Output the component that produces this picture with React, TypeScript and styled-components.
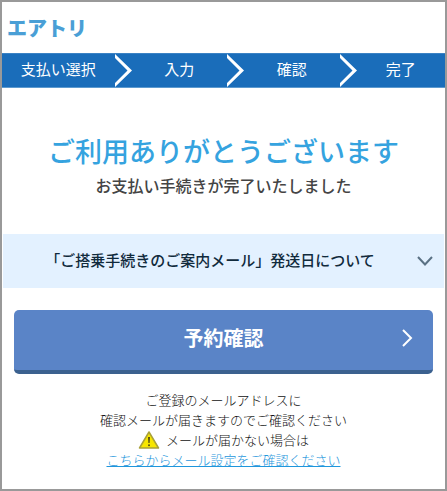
import React from "react";
import styled, { createGlobalStyle } from "styled-components";

const GlobalStyle = createGlobalStyle`
  *, *::before, *::after { box-sizing: border-box; }
  body {
    margin: 0;
    background: #fff;
    color: #333;
    font-family: "Noto Sans CJK JP", sans-serif;
  }
`;

const Page = styled.div`
  display: flex;
  flex-direction: column;
  min-height: 100vh;
  border: 2px solid #999;
  background: #fff;
`;

const Header = styled.header`
  display: flex;
  align-items: center;
  height: 51px;
  padding: 0 5px;
`;

const Logo = styled.a`
  color: #4a9fd6;
  font-size: 20px;
  font-weight: 900;
  line-height: 20px;
  text-decoration: none;
`;

const Steps = styled.ol`
  display: grid;
  grid-template-columns: 16fr 16fr 16fr 15fr;
  height: 35px;
  margin: 0;
  padding: 0;
  list-style: none;
  background: #1a6dba;
  border-top: 1px solid #3b82c4;
  border-bottom: 1px solid #5d9acf;
  color: #fff;
  font-size: 15px;
  line-height: 30px;
`;

const Step = styled.li`
  display: flex;
`;

const StepLabel = styled.span`
  flex: 1;
  text-align: center;
`;

const StepArrow = styled.svg`
  flex: none;
  width: 17px;
  height: 33px;
`;

const Thanks = styled.section`
  padding: 44px 0 36px;
  text-align: center;
`;

const Title = styled.h1`
  margin: 0;
  color: #35a3df;
  font-size: 27px;
  font-weight: 500;
  line-height: 38px;
`;

const Subtitle = styled.p`
  margin: 2px 0 0;
  color: #444;
  font-size: 16px;
  font-weight: 500;
  line-height: 26px;
`;

const Notice = styled.button`
  display: flex;
  align-items: center;
  height: 54px;
  margin: 0 1px;
  padding: 0 11px 0 0;
  border: 0;
  background: #e3f1ff;
  color: #102a3c;
  font: 500 15px/24px "Noto Sans CJK JP", sans-serif;
  cursor: pointer;
`;

const NoticeLabel = styled.span`
  flex: 1;
  padding-bottom: 2px;
  white-space: nowrap;
  text-align: center;
`;

const Confirm = styled.button`
  display: flex;
  align-items: center;
  height: 64px;
  margin: 22px 12px 0;
  padding: 0 20px 4px 32px;
  border: 0;
  border-bottom: 4px solid #3b618f;
  border-radius: 5px;
  background: #5a84c7;
  color: #fff;
  font: 700 20px/28px "Noto Sans CJK JP", sans-serif;
  cursor: pointer;
`;

const ConfirmLabel = styled.span`
  flex: 1;
  text-align: center;
`;

const Help = styled.section`
  padding-top: 16px;
  color: #111;
  font-size: 13px;
  font-weight: 300;
  line-height: 20px;
  text-align: center;
`;

const HelpLine = styled.p`
  display: flex;
  justify-content: center;
  align-items: center;
  gap: 6px;
  margin: 0;
`;

const HelpLink = styled.a`
  color: #1e96dc;
  text-decoration: underline;
`;

const Chevron = styled.svg`
  flex: none;
  fill: none;
  stroke: currentColor;
`;

const NoticeChevron = styled(Chevron)`
  color: #5a7184;
`;

const steps = ["支払い選択", "入力", "確認", "完了"];

export default function App() {
  return (
    <>
      <GlobalStyle />
      <Page>
        <Header>
          <Logo href="#">エアトリ</Logo>
        </Header>
        <Steps>
          {steps.map((step, index) => (
            <Step key={step}>
              {index > 0 && (
                <StepArrow viewBox="0 0 17 33" aria-hidden="true">
                  <path d="M0 0L17 16.5L0 33V29L12.5 16.5L0 4Z" fill="#fff" />
                </StepArrow>
              )}
              <StepLabel>{step}</StepLabel>
            </Step>
          ))}
        </Steps>
        <Thanks>
          <Title>ご利用ありがとうございます</Title>
          <Subtitle>お支払い手続きが完了いたしました</Subtitle>
        </Thanks>
        <Notice type="button" aria-expanded={false}>
          <NoticeLabel>「ご搭乗手続きのご案内メール」発送日について</NoticeLabel>
          <NoticeChevron width="16" height="10" viewBox="0 0 16 10" strokeWidth="2" aria-hidden="true">
            <path d="M1 1L8 8.5L15 1" />
          </NoticeChevron>
        </Notice>
        <Confirm type="button">
          <ConfirmLabel>予約確認</ConfirmLabel>
          <Chevron width="12" height="18" viewBox="0 0 12 18" strokeWidth="2" aria-hidden="true">
            <path d="M2 1L10 9L2 17" />
          </Chevron>
        </Confirm>
        <Help>
          <HelpLine>ご登録のメールアドレスに</HelpLine>
          <HelpLine>確認メールが届きますのでご確認ください</HelpLine>
          <HelpLine>
            <svg width="22" height="20" viewBox="0 0 22 20" role="img" aria-label="注意">
              <path
                d="M11 2L20.5 18H1.5Z"
                fill="#f7e600"
                stroke="#a9a13a"
                strokeWidth="1.5"
                strokeLinejoin="round"
              />
              <path d="M10 7H12L11.6 13H10.4Z" fill="#554f10" />
              <circle cx="11" cy="15.2" r="1" fill="#554f10" />
            </svg>
            メールが届かない場合は
          </HelpLine>
          <HelpLine>
            <HelpLink href="#">こちらからメール設定をご確認ください</HelpLink>
          </HelpLine>
        </Help>
      </Page>
    </>
  );
}
